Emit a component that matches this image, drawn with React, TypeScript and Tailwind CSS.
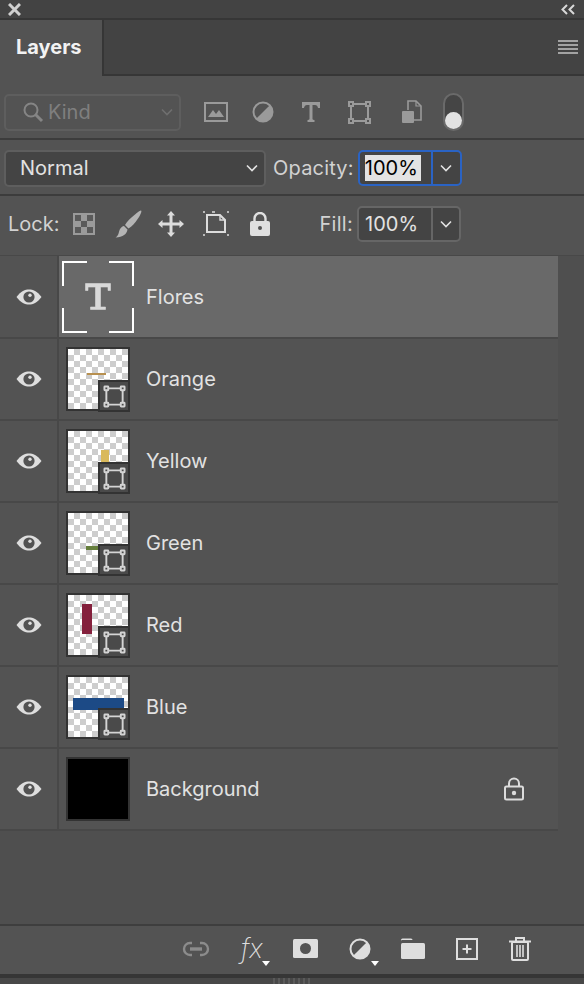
import React from "react";

const Chev = ({ className = "" }: { className?: string }) => (
  <svg width="14" height="10" viewBox="0 0 14 10" className={className} fill="none" stroke="currentColor" strokeWidth="1.6">
    <path d="M2 2.5 L7 7.5 L12 2.5" />
  </svg>
);

const Eye = () => (
  <svg width="26" height="16" viewBox="0 0 26 16">
    <path d="M0.5 8 C5 2 9 0.5 13 0.5 C17 0.5 21 2 25.5 8 C21 14 17 15.5 13 15.5 C9 15.5 5 14 0.5 8 Z" fill="#dedede" />
    <circle cx="13" cy="8" r="5.6" fill="#535353" />
    <circle cx="14" cy="6.2" r="1.7" fill="#dedede" />
  </svg>
);

const SmartBadge = () => (
  <div className="absolute left-[30px] top-[31px] w-[32px] h-[32px] bg-[#4a4a4a] border-2 border-[#333333] flex items-center justify-center">
    <svg width="23" height="23" viewBox="0 0 24 24" fill="none" stroke="#d4d4d4" strokeWidth="2">
      <path d="M5 3.5 H19 M20.5 5 V19 M19 20.5 H5 M3.5 19 V5" />
      <rect x="1.5" y="1.5" width="4" height="4" rx="0.5" />
      <rect x="18.5" y="1.5" width="4" height="4" rx="0.5" />
      <rect x="1.5" y="18.5" width="4" height="4" rx="0.5" />
      <rect x="18.5" y="18.5" width="4" height="4" rx="0.5" />
    </svg>
  </div>
);

type Shape = { x: number; y: number; w: number; h: number; c: string };

const Thumb = ({ shape }: { shape: Shape }) => (
  <div className="relative w-[64px] h-[64px] border-2 border-[#333333] bg-white">
    <svg width="60" height="60" viewBox="0 0 60 60" className="block">
      <defs>
        <pattern id={"chk" + shape.c.slice(1)} width="12" height="12" patternUnits="userSpaceOnUse">
          <rect width="12" height="12" fill="#ffffff" />
          <rect x="6" y="0" width="6" height="6" fill="#cdcdcd" />
          <rect x="0" y="6" width="6" height="6" fill="#cdcdcd" />
        </pattern>
      </defs>
      <rect width="60" height="60" fill={"url(#chk" + shape.c.slice(1) + ")"} />
      <rect x={shape.x} y={shape.y} width={shape.w} height={shape.h} fill={shape.c} />
    </svg>
    <SmartBadge />
  </div>
);

const layers: { name: string; shape: Shape }[] = [
  { name: "Orange", shape: { x: 19, y: 24, w: 19, h: 2, c: "#b8904f" } },
  { name: "Yellow", shape: { x: 33, y: 19, w: 8, h: 14, c: "#d9b95c" } },
  { name: "Green", shape: { x: 18, y: 33, w: 15, h: 4, c: "#667f3c" } },
  { name: "Red", shape: { x: 14, y: 9, w: 10, h: 30, c: "#84203c" } },
  { name: "Blue", shape: { x: 5, y: 21, w: 51, h: 12, c: "#1c4a86" } },
];

const Row = ({ children, selected = false }: { children: React.ReactNode; selected?: boolean }) => (
  <div className={"flex w-[558px] border-b-2 border-[#484848] " + (selected ? "h-[83px]" : "h-[82px]")}>
    <div className="w-[57px] flex items-center justify-center pl-[1px] bg-[#535353]">
      <Eye />
    </div>
    <div className="w-[2px] bg-[#484848]" />
    <div className={"flex-1 flex items-center relative " + (selected ? "bg-[#696969]" : "bg-[#535353]")}>{children}</div>
  </div>
);

export default function App() {
  return (
    <div className="w-[584px] h-[984px] overflow-hidden flex flex-col bg-[#4f4f4f] text-[#e2e2e2] font-['Inter',sans-serif] text-[20px]">
      {/* title strip */}
      <div className="h-[20px] shrink-0 bg-[#434343] border-b-2 border-[#363636] flex items-center justify-between pl-[8px] pr-[9px]">
        <svg width="13" height="13" viewBox="0 0 13 13" stroke="#cfcfcf" strokeWidth="3">
          <path d="M1 1 L12 12 M12 1 L1 12" />
        </svg>
        <svg width="14" height="11" viewBox="0 0 14 11" fill="none" stroke="#d8d8d8" strokeWidth="2">
          <path d="M6 1 L1.5 5.5 L6 10 M13 1 L8.5 5.5 L13 10" />
        </svg>
      </div>

      {/* tab strip */}
      <div className="h-[56px] shrink-0 flex bg-[#535353]">
        <div className="w-[102px] pl-[16px] pt-[14px] font-bold text-[#f2f2f2] text-[20px] leading-[26px]">Layers</div>
        <div className="flex-1 bg-[#434343] border-l-2 border-b-2 border-[#363636] flex items-center justify-end pr-[6px]">
          <svg width="20" height="14" viewBox="0 0 20 14" stroke="#c4c4c4" strokeWidth="1.4">
            <path d="M0 1 H20 M0 5 H20 M0 9 H20 M0 13 H20" />
          </svg>
        </div>
      </div>

      {/* filter row */}
      <div className="h-[64px] shrink-0 bg-[#535353] border-b-2 border-[#3c3c3c] flex items-center pl-[4px] pt-[10px]">
        <div className="w-[177px] h-[37px] rounded-[5px] border-2 border-[#5e5e5e] flex items-center pl-[16px] pr-[5px] text-[#7f7f7f]">
          <svg width="22" height="22" viewBox="0 0 22 22" fill="none" stroke="#858585" strokeWidth="2">
            <circle cx="9" cy="9" r="6.5" />
            <path d="M13.5 13.5 L20 20" strokeWidth="3" />
          </svg>
          <span className="ml-[4px] flex-1">Kind</span>
          <Chev className="text-[#6f6f6f]" />
        </div>
        <svg className="ml-[23px]" width="24" height="20" viewBox="0 0 24 20" fill="none">
          <rect x="1" y="1" width="22" height="18" stroke="#9a9a9a" strokeWidth="2" />
          <path d="M4 15 L9 8 L12 12 L15 8 L20 15 Z" fill="#9a9a9a" />
        </svg>
        <svg className="ml-[24px]" width="22" height="22" viewBox="0 0 22 22">
          <circle cx="11" cy="11" r="9.5" fill="none" stroke="#9a9a9a" strokeWidth="2" />
          <path d="M17.8 4.2 A9.5 9.5 0 0 1 4.2 17.8 Z" fill="#9a9a9a" />
        </svg>
        <svg className="ml-[27px]" width="20" height="22" viewBox="0 0 20 22" fill="#9a9a9a">
          <path d="M1 1 H19 V7 H17 Q16.5 4 14 4 H11.5 V18 Q11.5 19 13.5 19 V21 H6.5 V19 Q8.5 19 8.5 18 V4 H6 Q3.5 4 3 7 H1 Z" />
        </svg>
        <svg className="ml-[27px]" width="23" height="23" viewBox="0 0 23 23" fill="none" stroke="#9a9a9a" strokeWidth="2">
          <path d="M4.5 3 H18.5 M20 4.5 V18.5 M18.5 20 H4.5 M3 18.5 V4.5" />
          <rect x="1" y="1" width="4" height="4" />
          <rect x="18" y="1" width="4" height="4" />
          <rect x="1" y="18" width="4" height="4" />
          <rect x="18" y="18" width="4" height="4" />
        </svg>
        <svg className="ml-[30px]" width="21" height="24" viewBox="0 0 21 24" fill="none">
          <path d="M7 10 V1 H15 L20 6 V20 H13" stroke="#9a9a9a" strokeWidth="1.6" />
          <path d="M15 1 V6 H20" stroke="#9a9a9a" strokeWidth="1.2" />
          <rect x="1" y="11" width="12" height="12" rx="1" fill="#9a9a9a" />
        </svg>
        <div className="ml-[21px] w-[21px] h-[38px] rounded-full border-2 border-[#6a6a6a] bg-[#454545] flex items-end justify-center">
          <div className="w-[17px] h-[17px] rounded-full bg-[#e2e2e2]" />
        </div>
      </div>

      {/* blend row */}
      <div className="h-[56px] shrink-0 bg-[#535353] border-b-2 border-[#3c3c3c] flex items-center pl-[4px] pt-[2px]">
        <div className="w-[262px] h-[37px] rounded-[5px] border-2 border-[#5e5e5e] bg-[#444444] flex items-center pl-[14px] pr-[5px]">
          <span className="flex-1">Normal</span>
          <Chev />
        </div>
        <span className="ml-[7px] text-[#d2d2d2] tracking-[0.2px]">Opacity:</span>
        <div className="ml-[4px] w-[104px] h-[36px] rounded-[5px] border-2 border-[#2a63c4] bg-[#444444] flex items-stretch">
          <div className="w-[71px] flex items-center pl-[5px]">
            <span className="bg-[#e3e3e3] text-black leading-[26px] w-[56px]">100%</span>
          </div>
          <div className="flex-1 border-l-2 border-[#2a63c4] flex items-center justify-center">
            <Chev />
          </div>
        </div>
      </div>

      {/* lock row */}
      <div className="h-[60px] shrink-0 bg-[#535353] border-b border-[#484848] flex items-center pl-[8px] pb-[3px]">
        <span className="text-[#d2d2d2]">Lock:</span>
        <svg className="ml-[14px]" width="22" height="22" viewBox="0 0 22 22">
          <rect width="22" height="22" fill="#9a9a9a" />
          <rect x="2" y="2" width="6" height="6" fill="#5a5a5a" />
          <rect x="14" y="2" width="6" height="6" fill="#5a5a5a" />
          <rect x="8" y="8" width="6" height="6" fill="#5a5a5a" />
          <rect x="2" y="14" width="6" height="6" fill="#5a5a5a" />
          <rect x="14" y="14" width="6" height="6" fill="#5a5a5a" />
        </svg>
        <svg className="ml-[20px]" width="28" height="28" viewBox="0 0 28 28" fill="#b4b4b4">
          <path d="M26 0.5 C27 1 26 4 23 8.5 C20 13 17 16.5 13.5 18.5 L10 15 C12 11.5 16 7.5 20 4.5 C23 2 25 0.5 26 0.5 Z" />
          <path d="M9 16 L12.5 19.5 C12 24 8 27 0.5 27.5 C4 25.5 3.5 22 5 19 C6 17.5 7.5 16 9 16 Z" />
        </svg>
        <svg className="ml-[15px]" width="26" height="26" viewBox="0 0 26 26" fill="#dcdcdc">
          <path d="M13 0 L17 4.5 H14.5 V11.5 H21.5 V9 L26 13 L21.5 17 V14.5 H14.5 V21.5 H17 L13 26 L9 21.5 H11.5 V14.5 H4.5 V17 L0 13 L4.5 9 V11.5 H11.5 V4.5 H9 Z" />
        </svg>
        <svg className="ml-[18px]" width="28" height="26" viewBox="0 0 28 26" fill="none" stroke="#dcdcdc" strokeWidth="2">
          <path d="M5 4 H18 L23 9 V21 H5 Z" />
          <path d="M18 4 V9 H23" strokeWidth="1.4" />
          <path d="M1 1 H3 M1 24 H3 M25 1 H27 M25 24 H27 M10 1 H13" strokeWidth="1.6" />
        </svg>
        <svg className="ml-[20px]" width="20" height="24" viewBox="0 0 20 24">
          <path d="M4.5 10 V6.5 A5.5 5.5 0 0 1 15.5 6.5 V10" fill="none" stroke="#e0e0e0" strokeWidth="2.4" />
          <rect y="9" width="20" height="15" rx="2" fill="#e0e0e0" />
          <circle cx="10" cy="16" r="2" fill="#535353" />
        </svg>
        <span className="ml-[49px] text-[#d2d2d2] tracking-[0.3px]">Fill:</span>
        <div className="ml-[4px] w-[104px] h-[36px] rounded-[5px] border-2 border-[#666666] bg-[#444444] flex items-stretch">
          <div className="w-[72px] flex items-center pl-[6px]">100%</div>
          <div className="flex-1 border-l-2 border-[#666666] flex items-center justify-center">
            <Chev />
          </div>
        </div>
      </div>

      {/* layer list */}
      <div className="h-[668px] shrink-0 flex flex-col">
        <Row selected>
          <div className="ml-[1px] w-[76px] h-[76px] relative flex items-center justify-center">
            <svg width="76" height="76" viewBox="0 0 76 76" fill="none" stroke="#ffffff" strokeWidth="2">
              <path d="M27 3 H3 V27 M49 3 H73 V27 M27 73 H3 V49 M49 73 H73 V49" />
            </svg>
            <svg className="absolute" width="26" height="27" viewBox="0 0 26 27" fill="#d9d9d9" stroke="#d9d9d9" strokeWidth="0.6" strokeLinejoin="round">
              <path d="M0.5 0.5 H25.5 V7.5 H23 V4 H15.5 V24 H20.5 V26.5 H5.5 V24 H10.5 V4 H3 V7.5 H0.5 Z" />
            </svg>
          </div>
          <span className="ml-[10px]">Flores</span>
        </Row>
        {layers.map((l) => (
          <Row key={l.name}>
            <div className="ml-[7px]">
              <Thumb shape={l.shape} />
            </div>
            <span className="ml-[16px]">{l.name}</span>
          </Row>
        ))}
        <Row>
          <div className="ml-[7px] w-[64px] h-[64px] bg-black border-2 border-[#333333]" />
          <span className="ml-[16px]">Background</span>
          <svg className="absolute left-[444px]" width="22" height="24" viewBox="0 0 22 24" fill="none" stroke="#dcdcdc" strokeWidth="2">
            <path d="M6 10 V6.5 A5 5 0 0 1 16 6.5 V10" />
            <rect x="2" y="9.5" width="18" height="13" rx="1.5" />
            <circle cx="11" cy="16" r="2.2" fill="#dcdcdc" stroke="none" />
          </svg>
        </Row>
        <div className="flex-1" />
      </div>

      {/* footer toolbar */}
      <div className="h-[50px] shrink-0 bg-[#535353] border-t-2 border-[#3e3e3e] flex items-center pb-[3px]">
        <svg className="ml-[182px]" width="28" height="16" viewBox="0 0 28 16" fill="none" stroke="#8c8c8c" strokeWidth="2.4">
          <path d="M10 2 H8 A6 6 0 0 0 8 14 H10 M18 2 H20 A6 6 0 0 1 20 14 H18" />
          <path d="M8 8 H20" strokeWidth="3.4" />
        </svg>
        <div className="ml-[31px] w-[22px] text-[26px] leading-[30px] italic font-extralight text-[#dedede]">fx</div>
        <svg className="ml-[-1px] mt-[30px]" width="8" height="5" viewBox="0 0 8 5" fill="#ffffff">
          <path d="M0 0 H8 L4 5 Z" />
        </svg>
        <svg className="ml-[23px]" width="25" height="19" viewBox="0 0 25 19">
          <rect width="25" height="19" rx="1.5" fill="#dedede" />
          <circle cx="12.5" cy="9.5" r="5.5" fill="#535353" />
        </svg>
        <svg className="ml-[31px]" width="22" height="22" viewBox="0 0 22 22">
          <circle cx="11" cy="11" r="9.5" fill="none" stroke="#dedede" strokeWidth="2" />
          <path d="M17.8 4.2 A9.5 9.5 0 0 1 4.2 17.8 Z" fill="#dedede" />
        </svg>
        <svg className="ml-[0px] mt-[30px]" width="8" height="5" viewBox="0 0 8 5" fill="#ffffff">
          <path d="M0 0 H8 L4 5 Z" />
        </svg>
        <svg className="ml-[22px]" width="24" height="21" viewBox="0 0 24 21" fill="#dedede">
          <path d="M0 2 Q0 0.5 1.5 0.5 H10 Q11.5 0.5 11.5 2 H1 V2.5 Z" />
          <rect y="5" width="24" height="16" rx="1.5" />
        </svg>
        <svg className="ml-[31px]" width="22" height="22" viewBox="0 0 22 22" fill="none" stroke="#dedede" strokeWidth="2">
          <rect x="1" y="1" width="20" height="20" />
          <path d="M6.5 11 H15.5 M11 6.5 V15.5" />
        </svg>
        <svg className="ml-[31px]" width="22" height="24" viewBox="0 0 22 24" fill="none" stroke="#dedede" strokeWidth="2">
          <path d="M0 4.5 H22 M7 4 V1 H15 V4" />
          <rect x="3" y="5" width="16" height="18" rx="1" />
          <path d="M8 8 V20 M11 8 V20 M14 8 V20" strokeWidth="1.6" />
        </svg>
      </div>

      {/* bottom grip */}
      <div className="flex-1 bg-[#484848] border-t-4 border-[#363636] flex justify-center">
        <div className="w-[39px] h-full bg-[repeating-linear-gradient(90deg,#5a5a5a_0_2px,#484848_2px_5px)]" />
      </div>
    </div>
  );
}
